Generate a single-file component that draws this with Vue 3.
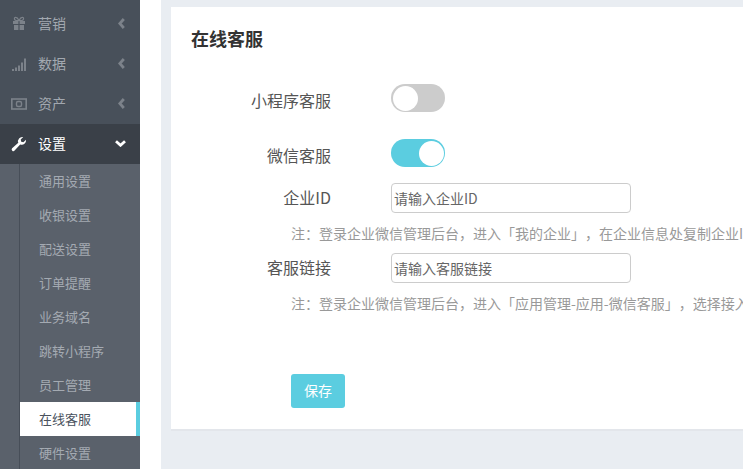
<script setup>
const groups = [
  { name: '营销', icon: 'gift' },
  { name: '数据', icon: 'signal' },
  { name: '资产', icon: 'money' }
]
const subs = ['通用设置', '收银设置', '配送设置', '订单提醒', '业务域名', '跳转小程序', '员工管理', '在线客服', '硬件设置']
</script>

<template>
  <div class="page">
    <aside class="side">
      <div v-for="g in groups" :key="g.name" class="row">
        <svg class="ico" viewBox="0 0 16 16">
          <g v-if="g.icon === 'gift'" fill="#7c828a">
            <path d="M2 5h5.400v3H2zM8.600 5H14v3H8.600zM3 9h4.400v5H3zM8.600 9H13v5H8.600z" />
            <path d="M4 1.500C5.500 1 7 2.500 8 4.500 9 2.500 10.500 1 12 1.500c1 .5.800 2.500-1 3H5c-1.800-.5-2-2.500-1-3z" fill="none" stroke="#7c828a" stroke-width="1.200" />
          </g>
          <g v-else-if="g.icon === 'signal'" fill="#7c828a">
            <path d="M1 13h2v2H1zM4 11.500h2V15H4zM7 9.500h2V15H7zM10 6.500h2V15h-2zM13 2.500h2V15h-2z" />
          </g>
          <g v-else fill="none" stroke="#7c828a">
            <rect x="0.800" y="3" width="14.400" height="10" stroke-width="1.600" />
            <rect x="5.500" y="5.500" width="5" height="5" rx="1.500" stroke-width="1.400" />
          </g>
        </svg>
        <span class="label">{{ g.name }}</span>
        <svg class="chev" viewBox="0 0 7 11"><path d="M5.800 1 1.800 5.500l4 4.500" fill="none" stroke="#7c828a" stroke-width="2.800" /></svg>
      </div>
      <div class="row active">
        <svg class="ico" viewBox="0 0 16 16"><path fill="#fff" d="M15 3.800a4.300 4.300 0 0 1-5.800 4.700L3.600 14.600a1.700 1.700 0 0 1-2.500-2.300l6.200-5.600A4.300 4.300 0 0 1 12.200 1L9.700 3.500l.5 2.200 2.200.6z" /></svg>
        <span class="label">设置</span>
        <svg class="chev down" viewBox="0 0 11 7"><path d="M1 1.300l4.500 4L10 1.300" fill="none" stroke="#fff" stroke-width="2.800" /></svg>
      </div>
      <ul class="subs">
        <li v-for="s in subs" :key="s" :class="{ on: s === '在线客服' }">{{ s }}</li>
      </ul>
    </aside>
    <main class="main">
      <section class="card">
        <h2 class="title">在线客服</h2>
        <div class="form-row sw-a">
          <label class="lbl down-2">小程序客服</label>
          <span class="switch"><i class="knob"></i></span>
        </div>
        <div class="form-row sw-b">
          <label class="lbl down-2">微信客服</label>
          <span class="switch on"><i class="knob"></i></span>
        </div>
        <div class="form-row in-a">
          <label class="lbl up-1">企业ID</label>
          <input class="input" placeholder="请输入企业ID" />
        </div>
        <p class="hint">注：登录企业微信管理后台，进入「我的企业」，在企业信息处复制企业ID</p>
        <div class="form-row in-b">
          <label class="lbl up-1">客服链接</label>
          <input class="input" placeholder="请输入客服链接" />
        </div>
        <p class="hint">注：登录企业微信管理后台，进入「应用管理-应用-微信客服」，选择接入场景并复制链接</p>
        <button class="save">保存</button>
      </section>
    </main>
  </div>
</template>

<style>
html, body { margin: 0; overflow: hidden; }
</style>

<style scoped>
.page {
  display: flex;
  width: 743px;
  height: 469px;
  overflow: hidden;
  background: #fff;
  font-family: "Noto Sans CJK SC", "Liberation Sans", sans-serif;
  text-spacing-trim: space-all;
}
.side {
  flex: 0 0 140px;
  height: 469px;
  padding-top: 4px;
  box-sizing: border-box;
  overflow: hidden;
  background: #48505a;
}
.row {
  display: flex;
  align-items: center;
  height: 40px;
  padding-left: 11px;
  box-sizing: border-box;
  color: #a2a8b0;
  font-size: 14px;
}
.row.active { background: #3a4048; color: #fff; }
.ico { width: 16px; height: 16px; flex: none; }
.label { margin: 0 0 2px 11px; flex: 1; }
.chev { width: 7px; height: 11px; margin: 0 15px 2px 0; flex: none; }
.chev.down { width: 11px; height: 7px; margin: 0 14px 1px 0; }
.subs {
  list-style: none;
  margin: 0;
  padding: 0 0 0 19px;
  background: #5a616b;
}
.subs li {
  height: 34px;
  line-height: 34px;
  font-size: 13px;
  color: #a4aab2;
  padding: 0 0 1px 19px;
  border-left: 1px solid #474e58;
  box-sizing: border-box;
}
.subs li.on {
  background: #fff;
  color: #4a525d;
  border-right: 4px solid #5bcde0;
}
.main {
  margin-left: 21px;
  flex: 1;
  min-width: 0;
  background: #e9edf2;
  padding: 7px 0 0 10px;
}
.card {
  height: 424px;
  background: #fff;
  box-sizing: border-box;
  padding: 18px 20px 20px;
  border-bottom: 2px solid #e3e6eb;
  overflow: hidden;
  white-space: nowrap;
}
.title {
  margin: 0;
  font-size: 18px;
  line-height: 26px;
  font-weight: 700;
  color: #333;
}
.form-row { display: flex; align-items: center; }
.lbl {
  width: 140px;
  margin-right: 60px;
  flex: none;
  text-align: right;
  font-size: 16px;
  color: #555;
}
.down-2 { margin-top: 4px; }
.up-1 { margin-bottom: 2px; }
.sw-a { margin-top: 33px; height: 28px; }
.sw-b { margin-top: 27px; height: 28px; }
.in-a { margin-top: 16px; height: 30px; }
.in-b { margin-top: 0; height: 30px; }
.switch {
  display: block;
  position: relative;
  width: 54px;
  height: 28px;
  border-radius: 14px;
  background: #ccc;
}
.switch.on { background: #5bcde0; }
.knob {
  position: absolute;
  left: 1.500px;
  top: 1.500px;
  width: 25px;
  height: 25px;
  border-radius: 50%;
  background: #fff;
}
.switch.on .knob { left: 27.500px; }
.input {
  width: 240px;
  height: 30px;
  box-sizing: border-box;
  border: 1px solid #ccc;
  border-radius: 4px;
  padding: 0 2px;
  font: 14px "Noto Sans CJK SC", "Liberation Sans", sans-serif;
  outline: none;
}
.input::placeholder { color: #666; opacity: 1; }
.hint {
  margin: 0;
  height: 40px;
  line-height: 40px;
  padding-left: 100px;
  font-size: 14px;
  color: #999;
}
.save {
  display: block;
  margin: 51px 0 0 100px;
  width: 54px;
  height: 34px;
  padding: 0 0 2px;
  border: 0;
  border-radius: 3px;
  background: #5bcde0;
  color: #fff;
  font: 14px "Noto Sans CJK SC", "Liberation Sans", sans-serif;
}
</style>
